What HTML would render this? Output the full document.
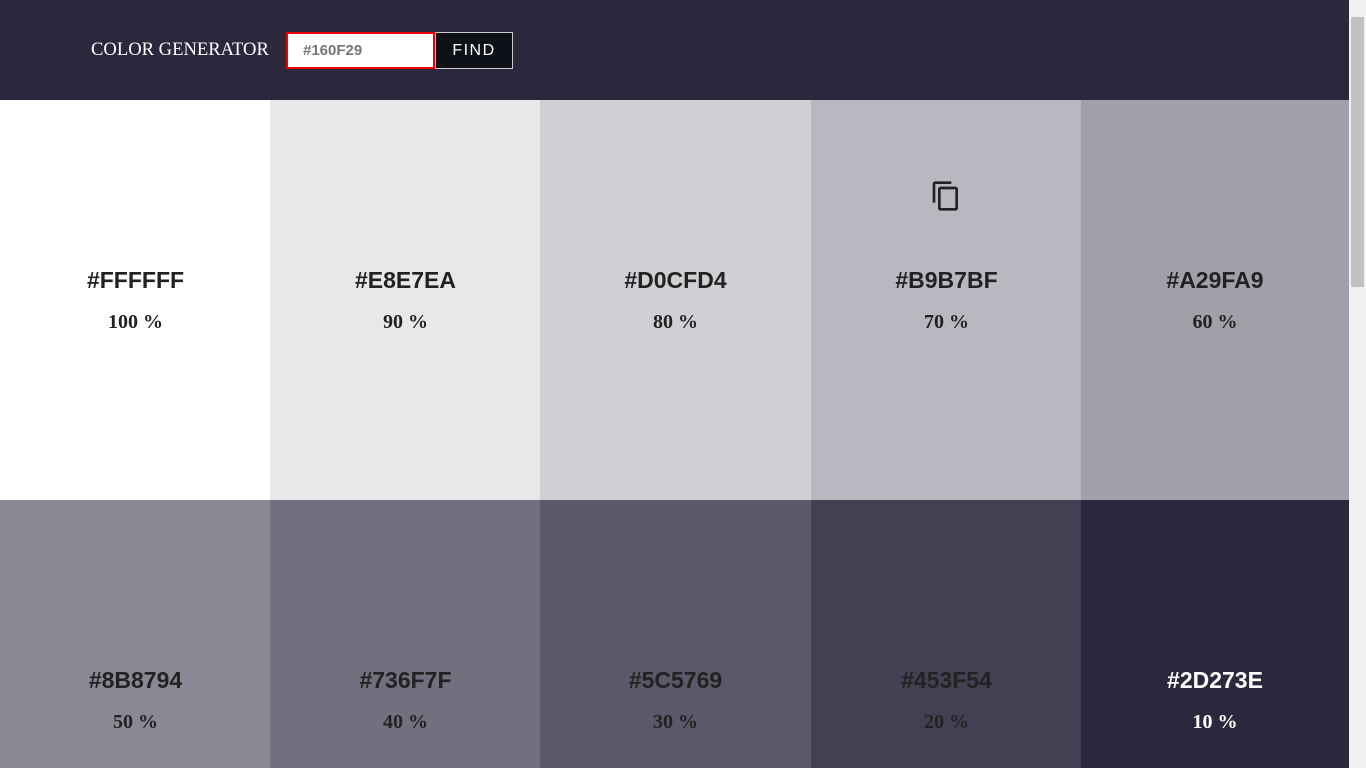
<!DOCTYPE html>
<html style="height:768px;overflow:hidden"><head><style>
*{margin:0;padding:0;box-sizing:border-box}
body{width:1366px;height:768px;overflow:hidden;background:#fff;position:relative}
.hdr{position:absolute;left:0;top:0;width:1349px;height:100px;background:#2d273e}
.title{position:absolute;left:91px;top:39px;font:18.6px "Liberation Serif",serif;color:#fff}
.inp{position:absolute;left:286px;top:32px;width:149px;height:37px;background:#fff;border:2px solid #e00;font:bold 15px "Liberation Sans",sans-serif;color:#777;padding:8px 0 0 15px}
.btn{position:absolute;left:435px;top:32px;width:78px;height:37px;background:#0d1117;border:1px solid #ccc;color:#fff;font:16px "Liberation Sans",sans-serif;letter-spacing:1.5px;text-align:center;line-height:35px}
.sw{position:absolute;width:271px;height:400px;text-align:center}
.hx{position:absolute;left:0;right:0;top:167px;font:bold 23px "Liberation Sans",sans-serif;color:#222}
.pc{position:absolute;left:0;right:0;top:211px;font:bold 20px "Liberation Serif",serif;color:#222}
.sb{position:absolute;right:0;top:0;width:17px;height:768px;background:#f1f1f1}
.th{position:absolute;right:2px;top:17px;width:13px;height:270px;background:#c1c1c1}
</style></head><body>
<div class="hdr"><div class="title">COLOR GENERATOR</div><div class="inp">#160F29</div><div class="btn">FIND</div></div>
<div class="sw" style="left:0;top:100px;background:#ffffff"><div class="hx">#FFFFFF</div><div class="pc">100 %</div></div>
<div class="sw" style="left:270px;top:100px;background:#e8e7ea"><div class="hx">#E8E7EA</div><div class="pc">90 %</div></div>
<div class="sw" style="left:540px;top:100px;background:#d0cfd4"><div class="hx">#D0CFD4</div><div class="pc">80 %</div></div>
<div class="sw" style="left:811px;top:100px;background:#b9b7bf"><svg style="position:absolute;left:119px;top:80px" width="32" height="32" viewBox="0 0 24 24"><path d="M16 1H4c-1.1 0-2 .9-2 2v14h2V3h12V1zm3 4H8c-1.1 0-2 .9-2 2v14c0 1.1.9 2 2 2h11c1.1 0 2-.9 2-2V7c0-1.1-.9-2-2-2zm0 16H8V7h11v14z" fill="#222"/></svg><div class="hx">#B9B7BF</div><div class="pc">70 %</div></div>
<div class="sw" style="left:1081px;top:100px;width:268px;background:#a29fa9"><div class="hx">#A29FA9</div><div class="pc">60 %</div></div>
<div class="sw" style="left:0;top:500px;height:268px;background:#8b8794"><div class="hx">#8B8794</div><div class="pc">50 %</div></div>
<div class="sw" style="left:270px;top:500px;height:268px;background:#736f7f"><div class="hx">#736F7F</div><div class="pc">40 %</div></div>
<div class="sw" style="left:540px;top:500px;height:268px;background:#5c5769"><div class="hx">#5C5769</div><div class="pc">30 %</div></div>
<div class="sw" style="left:811px;top:500px;height:268px;background:#453f54"><div class="hx">#453F54</div><div class="pc">20 %</div></div>
<div class="sw" style="left:1081px;top:500px;width:268px;height:268px;background:#2d273e"><div class="hx" style="color:#fff">#2D273E</div><div class="pc" style="color:#fff">10 %</div></div>
<div class="sb"><div class="th"></div></div>
</body></html>
